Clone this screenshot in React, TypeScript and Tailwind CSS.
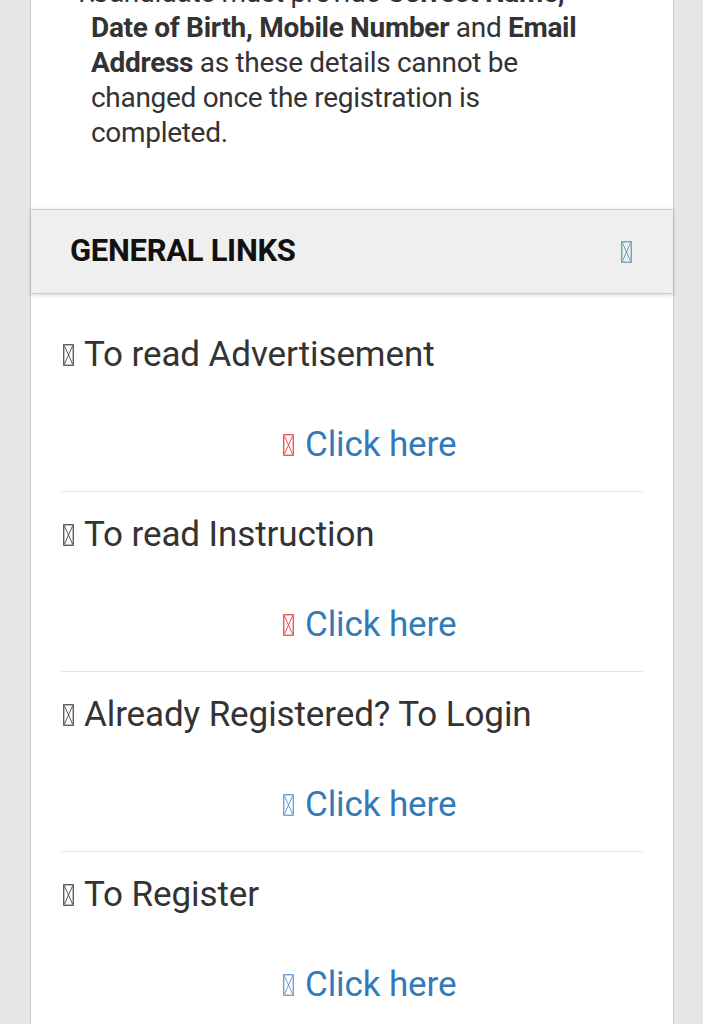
import React from "react";

function Tofu({ color, className = "" }: { color: string; className?: string }) {
  return (
    <svg width="11" height="22" viewBox="0 0 11 22" className={className} aria-hidden="true">
      <rect x="0.75" y="0.75" width="9.5" height="20.5" fill="none" stroke={color} strokeWidth="1.2" />
      <path d="M1.5 2 L9.5 20 M9.5 2 L1.5 20" stroke={color} strokeWidth="0.9" fill="none" />
    </svg>
  );
}

const items = [
  { title: "To read Advertisement", icon: "#ee3a3a" },
  { title: "To read Instruction", icon: "#ee3a3a" },
  { title: "Already Registered? To Login", icon: "#5b93c9" },
  { title: "To Register", icon: "#5b93c9" },
];

export default function App() {
  return (
    <div className="h-[1024px] w-[703px] overflow-hidden bg-[#e6e6e6]" style={{ fontFamily: "Roboto, 'Noto Sans', sans-serif" }}>
      <div className="ml-[30px] flow-root h-full w-[644px] border-x border-[#c9c9c9] bg-white">
        <div className="relative mt-[-25px] pl-[60px]">
          <span className="absolute left-[42px] top-0 text-[28px] leading-[35px] text-[#333]">1.</span>
          <p className="w-[520px] text-[28px] leading-[35px] tracking-[-0.3px] text-[#333]">
            Candidate must provide <b>Correct Name,</b> <b>Date of Birth, Mobile Number</b> and <b>Email Address</b> as these details cannot be changed once the registration is completed.
          </p>
        </div>
        <div className="mt-[59px] flex h-[85px] items-center justify-between border-y border-[#cfcfcf] bg-[#efefef] pl-[39px] pr-[41px] shadow-[0_1px_4px_rgba(0,0,0,0.18)]">
          <span className="text-[31px] font-bold tracking-[-0.3px] text-[#111]">GENERAL LINKS</span>
          <Tofu color="#5a9ba8" />
        </div>
        <div className="px-[30px] pt-[18px]">
          {items.map((it, i) => (
            <div key={i} className={i < items.length - 1 ? "border-b border-[#e4e4e4]" : ""}>
              <div className="mt-[23px] flex h-[40px] items-center pl-[2px] text-[35px] tracking-[-0.1px] text-[#333]">
                <Tofu color="#444" className="mr-[10px]" />
                <span>{it.title}</span>
              </div>
              <div className="mb-[26px] mt-[50px] flex h-[40px] items-center pl-[222px] text-[35px] tracking-[-0.1px] text-[#337ab7]">
                <Tofu color={it.icon} className="mr-[11px]" />
                <span>Click here</span>
              </div>
            </div>
          ))}
        </div>
      </div>
    </div>
  );
}
